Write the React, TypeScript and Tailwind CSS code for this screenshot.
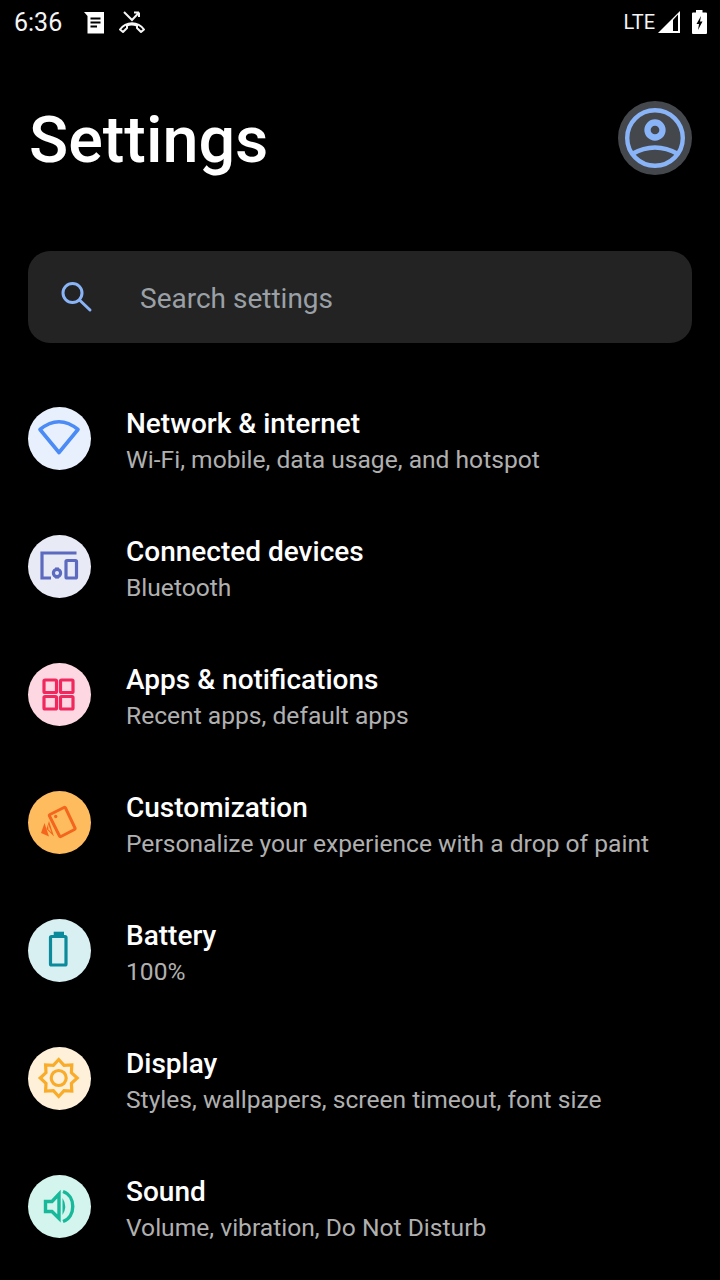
import React from "react";

function IconCircle({ bg, children }: { bg: string; children: React.ReactNode }) {
  return (
    <div className={`w-[63px] h-[63px] rounded-full shrink-0 ${bg}`}>
      <svg width="63" height="63" viewBox="0 0 63 63" fill="none">
        {children}
      </svg>
    </div>
  );
}

const star = (() => {
  const pts: string[] = [];
  for (let i = 0; i < 16; i++) {
    const r = i % 2 === 0 ? 18.5 : 13.8;
    const a = (i * Math.PI) / 8 - Math.PI / 2;
    pts.push(`${(30.7 + r * Math.cos(a)).toFixed(1)},${(31 + r * Math.sin(a)).toFixed(1)}`);
  }
  return pts.join(" ");
})();

const rows = [
  {
    title: "Network & internet",
    sub: "Wi-Fi, mobile, data usage, and hotspot",
    bg: "bg-[#e8f0fe]",
    icon: (
      <path d="M12 22.5 Q31 7 50 22.5 L31 45.5 Z" stroke="#4b8bf5" strokeWidth="3.6" strokeLinejoin="round" />
    ),
  },
  {
    title: "Connected devices",
    sub: "Bluetooth",
    bg: "bg-[#e8eaf6]",
    icon: (
      <g stroke="#5c6bc0" strokeWidth="3.2">
        <path d="M48.5 18H14V43H23" />
        <rect x="38" y="25.5" width="10.5" height="17.5" rx="1" />
        <circle cx="29" cy="38" r="3.6" />
        <path d="M27 33.5h4M27 42.5h4" strokeWidth="2" />
      </g>
    ),
  },
  {
    title: "Apps & notifications",
    sub: "Recent apps, default apps",
    bg: "bg-[#fdd7e2]",
    icon: (
      <g stroke="#f0285e" strokeWidth="3.2">
        <rect x="16" y="17" width="12.5" height="12.5" rx="1" />
        <rect x="32.5" y="17" width="12.5" height="12.5" rx="1" />
        <rect x="16" y="33.5" width="12.5" height="12.5" rx="1" />
        <rect x="32.5" y="33.5" width="12.5" height="12.5" rx="1" />
      </g>
    ),
  },
  {
    title: "Customization",
    sub: "Personalize your experience with a drop of paint",
    bg: "bg-[#ffbc5e]",
    icon: (
      <g>
        <path d="M22 23.5 L36 16.5 Q37 16 37.5 17 L47 37 Q47.5 38 46.5 38.5 L33 45.5 Q32 46 31.5 45 L21.5 25 Q21 24 22 23.5 Z" stroke="#f4661e" strokeWidth="3" strokeLinejoin="round" />
        <circle cx="27.7" cy="25.5" r="1.7" fill="#f4661e" />
        <path d="M21 30 L18.5 38 L26 45.5 Z" fill="#f4661e" />
        <path d="M16.5 32 L13 42 L21 45.5 Z" fill="#f4661e" />
        <path d="M20 33 L20.5 38.5 L23.5 41.5 Z" fill="#ffbc5e" />
      </g>
    ),
  },
  {
    title: "Battery",
    sub: "100%",
    bg: "bg-[#d9f0f3]",
    icon: (
      <g>
        <rect x="22.5" y="17.5" width="15.5" height="28.5" rx="1" stroke="#0a8a9b" strokeWidth="3.2" />
        <rect x="25.7" y="12.7" width="10.3" height="4" fill="#0a8a9b" />
      </g>
    ),
  },
  {
    title: "Display",
    sub: "Styles, wallpapers, screen timeout, font size",
    bg: "bg-[#fef0d9]",
    icon: (
      <g stroke="#f9ab2a" strokeWidth="3.2">
        <polygon points={star} strokeLinejoin="miter" />
        <circle cx="30.7" cy="31" r="7.5" />
      </g>
    ),
  },
  {
    title: "Sound",
    sub: "Volume, vibration, Do Not Disturb",
    bg: "bg-[#d3f5ee]",
    icon: (
      <g>
        <path d="M17.5 26.5 H24 L31 19 V43.5 L24 36.5 H17.5 Z" stroke="#17b99a" strokeWidth="3.4" strokeLinejoin="miter" />
        <path d="M34.5 23 Q40 31.5 34.5 40 Z" fill="#17b99a" />
        <path d="M35 16.5 C48 21 48 42 35 46.5" stroke="#17b99a" strokeWidth="3.4" />
      </g>
    ),
  },
];

export default function App() {
  return (
    <div className="w-[720px] h-[1280px] overflow-hidden bg-black text-white font-['Roboto',sans-serif]">
      <div className="h-[44px] flex items-center justify-between pl-[14px] pr-[13px]">
        <div className="flex items-center">
          <span className="text-[25px] leading-none text-[#f5f5f5]">6:36</span>
          <svg className="ml-[21px]" width="22" height="23" viewBox="0 0 22 23">
            <path d="M1 1 H21 V22.5 H4.5 V5 Z" fill="#fff" />
            <path d="M7.5 7.5h10M7.5 11.5h10M7.5 15.5h6.5" stroke="#000" strokeWidth="2" />
          </svg>
          <svg className="ml-[13px]" width="28" height="24" viewBox="0 0 28 24" fill="none">
            <path d="M2 19.5 C8 11 20 11 26 19.5 L23 22 L19 18 V15.5 C15 14 12 14 9 15.5 V18 L5 22 Z" stroke="#f5f5f5" strokeWidth="2" strokeLinejoin="round" />
            <path d="M6 2 L14 10 L21 2.5 M21 2.5 H16 M21 2.5 V7" stroke="#f5f5f5" strokeWidth="2" />
          </svg>
        </div>
        <div className="flex items-center">
          <span className="text-[20px] leading-none text-[#f5f5f5]">LTE</span>
          <svg className="ml-[3px]" width="23" height="22" viewBox="0 0 23 22">
            <path d="M0 22 L22 0 V22 Z" fill="#fff" />
            <path d="M15 9 L20 3.5 V20 H15 Z" fill="#000" />
          </svg>
          <svg className="ml-[11px]" width="15" height="24" viewBox="0 0 15 24">
            <path d="M4 0 H10.5 V2.5 H14 Q15 2.5 15 3.5 V23 Q15 24 14 24 H1 Q0 24 0 23 V3.5 Q0 2.5 1 2.5 H4 Z" fill="#fff" />
            <path d="M9 6 L4.5 14 H7 L6 20 L10.5 11.5 H8 Z" fill="#000" />
          </svg>
        </div>
      </div>

      <div className="h-[207px] flex items-center justify-between pl-[29px] pr-[28px]">
        <h1 className="text-[64.7px] leading-none font-medium -mt-[14px]">Settings</h1>
        <svg className="-mt-[20px]" width="74" height="74" viewBox="0 0 74 74" fill="none">
          <circle cx="37" cy="37" r="37" fill="#44474b" />
          <circle cx="37" cy="37" r="27.8" stroke="#8ab4f8" strokeWidth="4.4" />
          <circle cx="37" cy="29" r="7.5" stroke="#8ab4f8" strokeWidth="6.3" />
          <path d="M14 53 Q37 40 60 53" stroke="#8ab4f8" strokeWidth="4.6" />
        </svg>
      </div>

      <div className="mx-[28px] h-[92px] rounded-[22px] bg-[#232323] flex items-center pl-[33px]">
        <svg width="32" height="32" viewBox="0 0 32 32" fill="none">
          <circle cx="11.5" cy="12" r="9.5" stroke="#8ab4f8" strokeWidth="3" />
          <path d="M18.5 19 L29 29" stroke="#8ab4f8" strokeWidth="3" strokeLinecap="round" />
        </svg>
        <span className="ml-[47px] mt-[4px] text-[28px] leading-none text-[#9aa0a6]">Search settings</span>
      </div>

      <div className="mt-[31px]">
        {rows.map((r) => (
          <div key={r.title} className="h-[128px] flex items-center pl-[28px]">
            <IconCircle bg={r.bg}>{r.icon}</IconCircle>
            <div className="ml-[35px] pt-[7px]">
              <div className="text-[28px] leading-[36px] font-medium text-white">{r.title}</div>
              <div className="text-[24.6px] leading-[35px] text-[#b0b0b0]">{r.sub}</div>
            </div>
          </div>
        ))}
      </div>
    </div>
  );
}
